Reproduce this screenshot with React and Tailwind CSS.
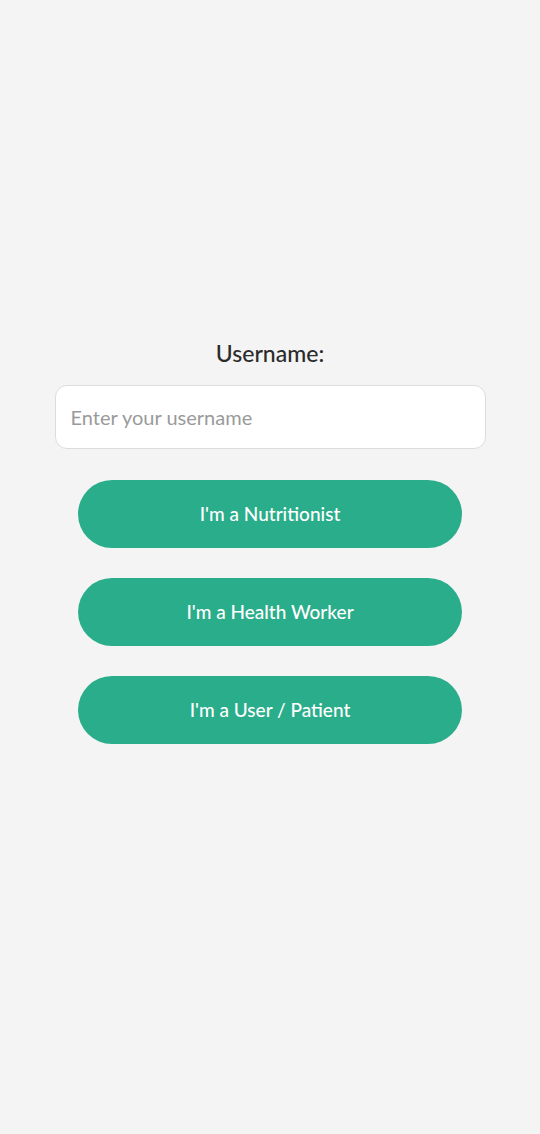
export default function App() {
  const btns = ["I'm a Nutritionist", "I'm a Health Worker", "I'm a User / Patient"];
  return (
    <div className="min-h-[1134px] w-full bg-[#f4f4f4] flex flex-col items-center pt-[337px]" style={{ fontFamily: "Lato, 'Open Sans', sans-serif" }}>
      <div className="text-[23px] leading-[33px] text-[#2b2b2b] font-medium">Username:</div>
      <input
        className="mt-[15px] w-[431px] h-[64px] rounded-[12px] bg-white border border-[#dcdcdc] px-[15px] text-[20px] text-[#555] placeholder:text-[#9a9a9a] outline-none"
        placeholder="Enter your username"
      />
      <div className="mt-[31px] flex flex-col gap-[30px]">
        {btns.map((b) => (
          <button key={b} className="w-[384px] h-[68px] rounded-full bg-[#2aad8a] text-white text-[19px] font-medium">
            {b}
          </button>
        ))}
      </div>
    </div>
  );
}
